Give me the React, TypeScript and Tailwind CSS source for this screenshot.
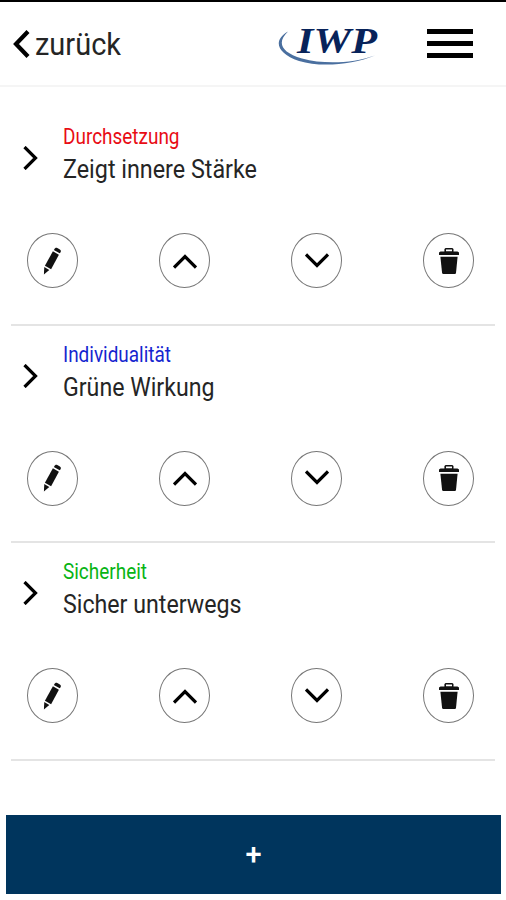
import * as React from 'react';
import { clsx } from 'clsx';

interface Item {
  id: number;
  category: string;
  title: string;
  color: string;
  labelWidth: string;
  titleWidth: string;
}

const items: Item[] = [
  { id: 1, category: 'Durchsetzung', title: 'Zeigt innere Stärke', color: 'fill-[#e80c14]', labelWidth: '116.5', titleWidth: '194' },
  { id: 2, category: 'Individualität', title: 'Grüne Wirkung', color: 'fill-[#1525cf]', labelWidth: '108', titleWidth: '151.5' },
  { id: 3, category: 'Sicherheit', title: 'Sicher unterwegs', color: 'fill-[#08b414]', labelWidth: '84', titleWidth: '178.5' },
];

function Logo() {
  return (
    <svg className="h-[56px] w-[110px]" viewBox="0 0 110 56" role="img" aria-label="IWP">
      <path
        d="M11 15.5C-4 24 -1 37 22 45C43 51.5 75 49 98 39.5C75 47.5 47 48.5 25 42.5C3 36 0 26 11 15.5Z"
        fill="#4a6f9f"
      />
      <text
        x="20"
        y="37"
        textLength="80"
        lengthAdjust="spacingAndGlyphs"
        className="fill-[#08235a] font-['Liberation_Serif',serif] text-[36px] font-bold italic"
      >
        IWP
      </text>
    </svg>
  );
}

function PencilIcon() {
  return (
    <svg className="mr-[2px]" width="18" height="28" viewBox="0 0 18 28" fill="#111">
      <path d="M11.4 2.2C12 0.9 13 0.4 14.3 1L16.9 2.5C18 3.2 18.2 4.2 17.4 5.4L16.7 6.3L10.8 2.9Z" />
      <path d="M9.9 4.3L15.9 7.8L8.1 22.2L1.9 18.7Z" />
      <path d="M1.3 20.1L6.3 23L0.9 27.6Z" />
    </svg>
  );
}

function TrashIcon() {
  return (
    <svg width="22" height="28" viewBox="0 0 22 28" fill="#111">
      <path d="M1 7V5.4L2.5 4.5H6.4V2.1L7.6 1H14.3L15.5 2.1V4.5H19.5L21 5.4V8H1ZM8 4.3H14V2.5H8Z" fillRule="evenodd" />
      <path d="M2.4 9.8H19.6L18 26C17.9 26.7 17.5 27 16.8 27H5.3C4.6 27 4.2 26.7 4.1 26Z" />
    </svg>
  );
}

function Chevron({ points, width, height, stroke = 3.2 }: { points: string; width: number; height: number; stroke?: number }) {
  return (
    <svg width={width} height={height} viewBox={`0 0 ${width} ${height}`} fill="none" stroke="#000" strokeWidth={stroke}>
      <polyline points={points} />
    </svg>
  );
}

function RoundButton({ label, children }: { label: string; children: React.ReactNode }) {
  return (
    <button
      type="button"
      aria-label={label}
      className="flex h-[55px] w-[51px] items-center justify-center rounded-[50%] border border-[#777]"
    >
      {children}
    </button>
  );
}

function ListItem({ item }: { item: Item }) {
  return (
    <li className="h-[217.5px] border-b-2 border-[#e4e4e4] pt-[11px]">
      <div className="flex h-[68px] pl-3">
        <div className="w-10 pt-[27px]">
          <Chevron width={16} height={24} points="1.5,1 12.5,12 1.5,23" />
        </div>
        <svg className="h-[68px] w-[220px] overflow-visible" role="group">
          <text
            x="0"
            y="24.5"
            textLength={item.labelWidth}
            lengthAdjust="spacingAndGlyphs"
            className={clsx('text-[21.5px]', item.color)}
          >
            {item.category}
          </text>
          <text
            x="0"
            y="59.4"
            textLength={item.titleWidth}
            lengthAdjust="spacingAndGlyphs"
            className="fill-[#252525] text-[25px]"
          >
            {item.title}
          </text>
        </svg>
      </div>
      <div className="mt-[46px] flex justify-between pr-[21px] pl-4">
        <RoundButton label="Bearbeiten">
          <PencilIcon />
        </RoundButton>
        <RoundButton label="Nach oben">
          <Chevron width={24} height={16} points="1,14.5 12,3.5 23,14.5" />
        </RoundButton>
        <RoundButton label="Nach unten">
          <Chevron width={24} height={16} points="1,1.5 12,12.5 23,1.5" />
        </RoundButton>
        <RoundButton label="Löschen">
          <TrashIcon />
        </RoundButton>
      </div>
    </li>
  );
}

export default function App() {
  return (
    <div className="flex h-[900px] w-[506px] flex-col border-t-2 border-black bg-white font-[Roboto,sans-serif]">
      <header className="flex h-[85px] items-center border-b-2 border-[#f5f5f5] pr-[33px] pl-3">
        <button type="button" className="flex items-center gap-[5px]">
          <Chevron width={18} height={30} points="16,2.5 4,15 16,27.5" stroke={4.2} />
          <svg className="h-12 w-[100px]">
            <text x="0" y="35" textLength="86" lengthAdjust="spacingAndGlyphs" className="fill-[#252525] text-[31px]">
              zurück
            </text>
          </svg>
        </button>
        <div className="ml-auto">
          <Logo />
        </div>
        <button type="button" aria-label="Menü" className="ml-10 flex w-[46px] flex-col gap-[6.5px]">
          <span className="h-[5.5px] bg-black" />
          <span className="h-[5.5px] bg-black" />
          <span className="h-[5.5px] bg-black" />
        </button>
      </header>

      <ul className="mt-[21px] px-[11px]">
        {items.map(item => (
          <ListItem key={item.id} item={item} />
        ))}
      </ul>

      <button
        type="button"
        className="mt-[54.5px] mr-[5px] ml-[6px] flex h-[79px] items-center justify-center bg-[#00355d] pt-[1px] text-[29px] font-medium text-white"
      >
        +
      </button>
    </div>
  );
}
